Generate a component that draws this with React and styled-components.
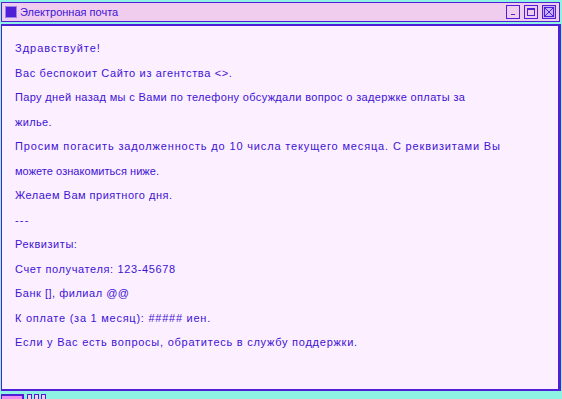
import React from "react";
import styled, { createGlobalStyle } from "styled-components";

const PURPLE = "#5020d8";
const INK = "#4012d6";
const CYAN = "#8ef3e2";
const PINK = "#f0cdef";
const PAPER = "#fcefff";

const Global = createGlobalStyle`
  html, body { margin: 0; padding: 0; }
  body {
    background: ${CYAN};
    width: 562px;
    height: 399px;
    overflow: hidden;
    font-family: "Liberation Sans", Arial, sans-serif;
  }
  #root { height: 399px; }
`;

const Desktop = styled.div`
  display: flex;
  flex-direction: column;
  height: 399px;
`;

const TopStrip = styled.div`
  display: flex;
  height: 2px;
  margin-bottom: 2px;
`;

const StripSeg = styled.div`
  width: ${(p) => p.w}px;
  background: ${(p) => p.c};
`;

const Window = styled.div`
  display: flex;
  flex-direction: column;
  align-items: flex-start;
  gap: 2px;
  padding-left: 1px;
`;

const TitleBar = styled.div`
  box-sizing: border-box;
  display: flex;
  align-items: center;
  height: 20px;
  width: 559px;
  border: 1px solid ${PURPLE};
  background: ${PINK};
  padding: 0 3px;
  gap: 3px;
`;

const AppIcon = styled.div`
  width: 10px;
  height: 10px;
  background: ${PURPLE};
  border: 1px solid #9a86e6;
`;

const Title = styled.div`
  flex: 1;
  font-size: 11px;
  color: ${INK};
  letter-spacing: 0;
`;

const Buttons = styled.div`
  display: flex;
  gap: 4px;
`;

const WinButton = styled.div`
  box-sizing: border-box;
  width: 14px;
  height: 14px;
  border: 1px solid ${PURPLE};
  background: ${(p) => (p.$close ? "#c9b2f2" : PINK)};
  display: flex;
  align-items: center;
  justify-content: center;
`;

const Content = styled.div`
  box-sizing: border-box;
  height: 367px;
  width: 560px;
  border-style: solid;
  border-color: ${PURPLE};
  border-width: 2px 3px 2px 1px;
  background: ${PAPER};
  padding: 10px 0 0 13px;
`;

const Line = styled.div`
  font-size: 11px;
  line-height: 24.5px;
  letter-spacing: ${(p) => p.$track}px;
  color: ${INK};
  white-space: nowrap;
`;

const Taskbar = styled.div`
  display: flex;
  gap: 2px;
  margin-top: 3px;
  padding-left: 1px;
  align-items: flex-start;
`;

const TaskItem = styled.div`
  width: 20px;
  height: 6px;
  border: 1px solid ${PURPLE};
  border-width: 2px 2px 0 1px;
  background: #f08ef0;
  margin-right: 1px;
`;

const TaskSquare = styled.div`
  width: 3px;
  height: 6px;
  border: 1px solid ${PURPLE};
  background: ${PINK};
`;

const lines = [
  ["Здравствуйте!", 1.0],
  ["Вас беспокоит Сайто из агентства <>.", 0.65],
  ["Пару дней назад мы с Вами по телефону обсуждали вопрос о задержке оплаты за", 0.35],
  ["жилье.", 0.35],
  ["Просим погасить задолженность до 10 числа текущего месяца. С реквизитами Вы", 0.85],
  ["можете ознакомиться ниже.", 0.05],
  ["Желаем Вам приятного дня.", 0.5],
  ["---", 1.2],
  ["Реквизиты:", 0.55],
  ["Счет получателя: 123-45678", 0.62],
  ["Банк [], филиал @@", 0.52],
  ["К оплате (за 1 месяц): ##### иен.", 0.75],
  ["Если у Вас есть вопросы, обратитесь в службу поддержки.", 0.75],
];

const strip = [
  [108, CYAN],
  [70, "#8a70d8"],
  [60, "#b8a0e8"],
  [110, "#6040d0"],
  [30, "#b090e0"],
  [80, "#5a38d0"],
  [104, CYAN],
];

export default function App() {
  return (
    <>
      <Global />
      <Desktop>
        <TopStrip>
          {strip.map(([w, c], i) => (
            <StripSeg key={i} w={w} c={c} />
          ))}
        </TopStrip>
        <Window>
          <TitleBar>
            <AppIcon />
            <Title>Электронная почта</Title>
            <Buttons>
              <WinButton>
                <svg width="12" height="12" viewBox="0 0 12 12">
                  <rect x="4" y="8" width="4" height="1" fill={PURPLE} />
                </svg>
              </WinButton>
              <WinButton>
                <svg width="12" height="12" viewBox="0 0 12 12">
                  <rect x="2.5" y="2.5" width="7" height="7" fill="none" stroke={PURPLE} strokeWidth="1" />
                  <rect x="2" y="2" width="8" height="2" fill={PURPLE} />
                </svg>
              </WinButton>
              <WinButton $close>
                <svg width="12" height="12" viewBox="0 0 12 12">
                  <rect x="1.5" y="1.5" width="9" height="9" fill="none" stroke={PURPLE} strokeWidth="1" />
                  <path d="M1.5 1.5 L10.5 10.5 M10.5 1.5 L1.5 10.5" stroke={PURPLE} strokeWidth="1" />
                </svg>
              </WinButton>
            </Buttons>
          </TitleBar>
          <Content>
            {lines.map(([t, k], i) => (
              <Line key={i} $track={k}>
                {t}
              </Line>
            ))}
          </Content>
        </Window>
        <Taskbar>
          <TaskItem />
          <TaskSquare />
          <TaskSquare />
          <TaskSquare />
        </Taskbar>
      </Desktop>
    </>
  );
}
